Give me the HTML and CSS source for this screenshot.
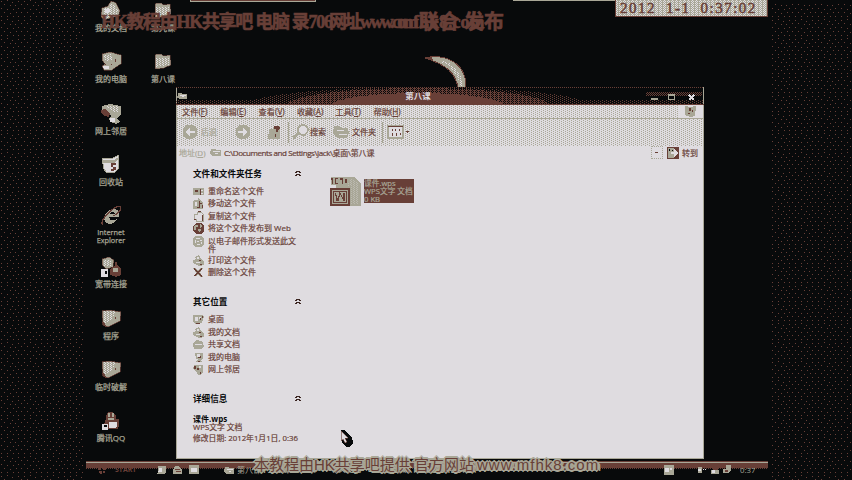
FILE: index.html
```html
<!DOCTYPE html>
<html lang="zh-CN">
<head>
<meta charset="utf-8">
<title>第八课</title>
<link rel="stylesheet" href="styles.css">
</head>
<body>
<svg class="defs" width="0" height="0" aria-hidden="true">
  <defs>
    <pattern id="half" width="2" height="2" patternUnits="userSpaceOnUse"><path fill="#683f37" d="M0 0h1v1H0zM1 1h1v1H1z"/></pattern>
    <pattern id="quarter" width="4" height="2" patternUnits="userSpaceOnUse"><path fill="#683f37" d="M0 0h1v1H0zM2 1h1v1H2z"/></pattern>
    <pattern id="light" width="3" height="2" patternUnits="userSpaceOnUse"><path fill="#dfdce0" d="M0 0h1v1H0zM1 1h1v1H1z"/></pattern>
    <pattern id="noise" width="23" height="19" patternUnits="userSpaceOnUse"><path fill="#683f37" d="M1 1h1v1H1zM7 0h1v1H7zM12 2h1v1h-1zM18 1h1v1h-1zM4 4h1v1H4zM10 5h1v1h-1zM15 5h1v1h-1zM21 4h1v1h-1zM1 8h1v1H1zM7 9h1v1H7zM13 9h1v1h-1zM18 8h1v1h-1zM4 12h1v1H4zM10 13h1v1h-1zM16 12h1v1h-1zM21 12h1v1h-1zM1 16h1v1H1zM7 16h1v1H7zM13 16h1v1h-1zM18 16h1v1h-1z"/></pattern>
    <symbol id="docs" viewBox="0 0 20 20"><path fill="#a9a797" stroke="#683f37" stroke-width=".6" d="M1 7l6-2 3-5 5 2 4 8-2 5-8 2-6 2-3-3z"/><path fill="url(#light)" d="M3 8l5-2 3-5 6 9-2 5-11 2z"/><path fill="#dfdce0" d="M3 8l5-1 2 4-5 1z"/></symbol>
    <symbol id="pc" viewBox="0 0 20 20"><path fill="#a9a797" stroke="#683f37" stroke-width=".6" d="M1 2L9 0l11 3v9l-5 3-4 3H3l-2-4 3-2-3-4z"/><path fill="url(#light)" d="M3 3l7-1 1 6-7 1z"/><path fill="#dfdce0" d="M2 14h6v3H3z"/><path fill="#683f37" d="M4 12h1v1H4zM10 12h1v1h-1zM14 7h1v3h-1z"/></symbol>
    <symbol id="net" viewBox="0 0 20 20"><path fill="#a9a797" d="M1 2l8-2 11 2v8l-4 4 3 4-4 2-6-2-1-4 3-2-5-2-5-3z"/><path fill="#683f37" d="M0 6l4-1 5 4-1 4-5-1-3-3z"/><path fill="url(#light)" d="M5 2h12v6h-6z"/><path fill="#dfdce0" d="M9 14h5v4H9z"/></symbol>
    <symbol id="bin" viewBox="0 0 20 20"><path fill="#dfdce0" stroke="#a9a797" d="M1 4l11-1 6-3-1 14-4 4-8-1-2-3z"/><path fill="#a9a797" d="M2 5h11l5-3v2l-5 4H2z"/><path fill="#683f37" d="M10 8h5v2h-3v2h3v3l-5 1v-2h2v-2h-2z"/></symbol>
    <symbol id="ie" viewBox="0 0 20 20"><path fill="#a9a797" fill-rule="evenodd" d="M5 7c4-6 12-5 13 0v4H8c0 4 4 4 8 2-3 7-13 6-13-1zM9 8h5c0-3-4-3-5 0z"/><path fill="none" stroke="#683f37" stroke-width="1.3" d="M2 19c-4-2 4-12 10-16s8-3 8-1c0 3-5 7-8 8"/></symbol>
    <symbol id="dial" viewBox="0 0 20 20"><path fill="#a9a797" stroke="#683f37" stroke-width=".6" d="M1 2l7-2 5 3-1 7-7 2-4-4z"/><path fill="url(#light)" d="M3 3h7v6H3z"/><path fill="#683f37" d="M14 5h2v3l4 4v6l-5 2-6-2v-6l5-3z"/><path fill="#dfdce0" d="M0 12h7v8H0z"/><path fill="#a9a797" d="M12 11h5v4h-5z"/><path fill="#080a0b" d="M4 14h2v3H4z"/></symbol>
    <symbol id="box" viewBox="0 0 20 20"><path fill="#a9a797" stroke="#683f37" stroke-width=".7" d="M1 2l7-1 12 2-1 9-12 6-5-2z"/><path fill="url(#light)" d="M2 2h12l-2 7-9 6z"/><path fill="#683f37" d="M1 13h2l3 5H4zM14 8h1v2h-1z"/></symbol>
    <symbol id="qq" viewBox="0 0 20 20"><path fill="#683f37" d="M7 1h5l3 4v3h3v6l-1 4H3v-5l2-5V5z"/><path fill="#a9a797" d="M7 2h2v4H7zM11 2h2v4h-2zM7 7h6v2H7z"/><path fill="#dfdce0" d="M8 11h8v4l-2 2H8zM1 13h6v6H1z"/><path fill="#080a0b" d="M3 14h3v2H3z"/></symbol>
    <symbol id="folder" viewBox="0 0 20 20"><path fill="#a9a797" stroke="#683f37" stroke-width=".5" d="M2 4l1-2h5l2 2 7-1 1 10-7 3-9 1z"/><path fill="url(#light)" d="M3 6h13v7l-13 2z"/></symbol>
    <symbol id="mini-folder" viewBox="0 0 12 9"><path fill="#a9a797" d="M1 1h4l1 1h5v6H3L0 6z"/><path fill="#dfdce0" d="M3 3h7v1H3zM5 5h3v1H5z"/></symbol>
    <symbol id="rename" viewBox="0 0 11 11"><path fill="#a9a797" d="M0 2h11v7H0z"/><path fill="#683f37" d="M2 4h3v2H2zM7 3h1v6H7z"/><path fill="#dfdce0" d="M8 4h2v1H8zM8 7h2v1H8z"/></symbol>
    <symbol id="move" viewBox="0 0 11 11"><path fill="#a9a797" d="M1 2h4V0l5 4v7H0V5z"/><path fill="#dfdce0" d="M2 4h2v4H2z"/><path fill="#683f37" d="M6 3h1v2h2v1H7v4H4V9h2zM9 7h1v3H9z"/></symbol>
    <symbol id="copy" viewBox="0 0 11 11"><path fill="#dfdce0" stroke="#a9a797" d="M1 3h3V1h4l2 2v7H3V8H1z"/><path fill="#683f37" d="M5 0h3v1H5zM9 4h1v6H9zM1 8h2v1H1z"/></symbol>
    <symbol id="globe" viewBox="0 0 11 11"><path fill="#683f37" d="M3 0h5l3 3v5l-3 3H3L0 8V3z"/><path fill="#a9a797" d="M2 2h3v2H3v3H1V4zM7 1l2 2-2 2zM5 6h3v2L6 9z"/></symbol>
    <symbol id="mail" viewBox="0 0 11 11"><path fill="#a9a797" d="M2 0h7l2 3v6l-3 2H2L0 9V3z"/><path fill="#dfdce0" d="M3 2h4v1H3zM2 4h1v3H2zM4 5h2v1H4zM7 4h2v1H7zM8 6h1v2H8zM4 8h3v1H4z"/></symbol>
    <symbol id="desk" viewBox="0 0 11 11"><path fill="#a9a797" d="M0 1h8l3 1-2 7-7 1-2-2z"/><path fill="#dfdce0" d="M2 3h3v4H2zM6 3h2v2H6z"/><path fill="#683f37" d="M9 2h1v2H8v2H7V4h2zM3 9h4v1H3z"/></symbol>
    <symbol id="print" viewBox="0 0 11 11"><path fill="#a9a797" d="M2 2l4-2 2 4 3 2v4l-5 1-6-3V5l3-1z"/><path fill="#dfdce0" d="M4 2h2v2H4zM3 7h4v1H3z"/><path fill="#683f37" d="M6 5h2v1H6zM7 9h2v1H7z"/></symbol>
    <symbol id="delete" viewBox="0 0 11 11"><path fill="none" stroke="#a9a797" stroke-width="2.500" d="M1 1l8 9M9 1L2 9"/><path fill="none" stroke="#683f37" stroke-width="1.4" d="M1 1l8 9M9 1L2 9"/></symbol>
    <symbol id="arrows" viewBox="0 0 6 7"><path fill="none" stroke="#3a2420" d="M.5 3L3 .8 5.500 3M.5 6L3 3.800 5.500 6"/></symbol>
  </defs>
</svg>

<main class="screen">
  <svg class="grain" width="84" height="480"><rect width="84" height="480" fill="url(#noise)"/></svg>

  <section class="desktop">
    <div class="column">
      <div class="shortcut"><svg><use href="#docs"/></svg><span>我的文档</span></div>
      <div class="shortcut"><svg><use href="#pc"/></svg><span>我的电脑</span></div>
      <div class="shortcut"><svg><use href="#net"/></svg><span>网上邻居</span></div>
      <div class="shortcut"><svg><use href="#bin"/></svg><span>回收站</span></div>
      <div class="shortcut"><svg><use href="#ie"/></svg><span class="latin">Internet<br>Explorer</span></div>
      <div class="shortcut"><svg><use href="#dial"/></svg><span>宽带连接</span></div>
      <div class="shortcut"><svg><use href="#box"/></svg><span>程序</span></div>
      <div class="shortcut"><svg><use href="#box"/></svg><span>临时破解</span></div>
      <div class="shortcut"><svg><use href="#qq"/></svg><span>腾讯QQ</span></div>
    </div>
    <div class="column">
      <div class="shortcut"><svg><use href="#folder"/></svg><span>第九课</span></div>
      <div class="shortcut"><svg><use href="#folder"/></svg><span>第八课</span></div>
    </div>

    <div class="dock-edge"></div>
    <div class="dock-line"></div>
    <div class="clock"><span>2012</span><span>1-1</span><span>0:37:02</span></div>
    <svg class="moon" width="44" height="34" viewBox="0 0 44 34"><path fill="#a9a797" stroke="#683f37" d="M1 2C18-2 42 4 42 31h-8C31 17 23 9 1 2z"/><path fill="url(#light)" d="M17 4c12 3 20 11 22 26h-3C33 17 27 10 17 6z"/><path fill="#683f37" d="M0 2l8-2 1 5z"/></svg>

    <section class="window">
      <header class="titlebar">
        <svg class="glow" width="528" height="18" viewBox="0 0 528 18">
          <path stroke="#683f37" stroke-dasharray="1 1" d="M0 .5h528"/>
          <path fill="url(#quarter)" d="M0 13h528v4H0z"/>
          <ellipse cx="242" cy="19" rx="172" ry="19" fill="url(#quarter)"/>
          <ellipse cx="242" cy="19" rx="132" ry="18" fill="url(#half)"/>
          <ellipse cx="242" cy="20" rx="88" ry="14" fill="#683f37"/>
          <path fill="url(#half)" d="M470 5h56v4h-56z"/>
          <path fill="#683f37" d="M0 17h528v1H0z"/>
        </svg>
        <svg class="title-icon" viewBox="0 0 12 9"><use href="#mini-folder"/></svg>
        <h1>第八课</h1>
        <svg class="controls" width="46" height="9" viewBox="0 0 46 9"><path fill="#a9a797" d="M0 6h7v2H0z"/><path fill="none" stroke="#a9a797" d="M17.500 3.500h6v4h-6zM17 2.500h7"/><path fill="none" stroke="#dfdce0" stroke-width="1.500" d="M38 3l5 5M43 3l-5 5"/></svg>
      </header>

      <div class="menubar">
        <nav><span>文件(<u>F</u>)</span><span>编辑(<u>E</u>)</span><span>查看(<u>V</u>)</span><span>收藏(<u>A</u>)</span><span>工具(<u>T</u>)</span><span>帮助(<u>H</u>)</span></nav>
        <div class="flag"><svg width="13" height="13" viewBox="0 0 13 13"><path fill="#a9a797" d="M1 1l5 1 6-1-1 10-5 1-5-2z"/><path fill="#683f37" d="M5 3h2v3H5zM8 5h1v2H8zM4 8h2v1H4z"/></svg></div>
      </div>

      <div class="toolbar">
        <svg class="round" viewBox="0 0 16 16"><circle cx="8" cy="8" r="7.500" fill="#a9a797"/><path fill="#dfdce0" d="M3 8l5-4v3h5v2H8v3z"/></svg>
        <span class="muted">后退</span>
        <svg class="round forward" viewBox="0 0 16 16"><circle cx="8" cy="8" r="7.500" fill="#a9a797"/><path fill="#dfdce0" d="M13 8L8 4v3H3v2h5v3z"/></svg>
        <svg class="up" width="13" height="15" viewBox="0 0 13 15"><path fill="#a9a797" d="M1 4h4l2-3h5v13H0z"/><path fill="#683f37" d="M6 1h4l2 2-2 2v2H8V4H6zM7 9h1v3H7z"/></svg>
        <i></i>
        <svg class="search" width="18" height="16" viewBox="0 0 18 16"><path stroke="#a9a797" stroke-width="3" d="M1 14l6-5"/><circle cx="11" cy="6" r="5" fill="#dfdce0" stroke="#a9a797" stroke-width="1.600"/></svg>
        <span>搜索</span>
        <svg class="folders" width="17" height="14" viewBox="0 0 17 14"><path fill="#a9a797" d="M1 1h5l2 2h7v3h2l-3 7H4L0 8z"/><path fill="#dfdce0" d="M4 5h7v1H4zM6 9h8v1H6z"/></svg>
        <span>文件夹</span>
        <i class="second"></i>
        <svg class="views" width="22" height="14" viewBox="0 0 22 14"><path fill="#dfdce0" stroke="#a9a797" stroke-width="2" d="M1 1h15v12H1z"/><path fill="#683f37" d="M1 1h15v1H1zM5 4h1v2H5zM8 4h1v2H8zM12 4h1v2h-1zM5 8h1v3H5zM9 8h1v3H9zM13 8h1v2h-1zM19 6h3v1h-1v1h-1V7h-1z"/></svg>
      </div>

      <div class="address">
        <span class="muted">地址(<u>D</u>)</span>
        <svg width="12" height="9"><use href="#mini-folder"/></svg>
        <span class="path">C:\Documents and Settings\Jack\<b>桌面\第八课</b></span>
        <div class="drop"></div>
        <svg class="go" width="12" height="12" viewBox="0 0 12 12"><path fill="#683f37" d="M0 0h12v12H0z"/><path fill="#a9a797" d="M1 1h6v2l4 3-4 4v1H1z"/><path fill="#dfdce0" d="M7 2l4 4-4 4V7H4V5h3z"/><path fill="#080a0b" d="M2 2h1v2H2zM5 3h1v1H5z"/></svg>
        <span>转到</span>
      </div>

      <div class="content">
        <aside>
          <section class="tasks">
            <h2>文件和文件夹任务<svg><use href="#arrows"/></svg></h2>
            <ul>
              <li><svg><use href="#rename"/></svg>重命名这个文件</li>
              <li><svg><use href="#move"/></svg>移动这个文件</li>
              <li><svg><use href="#copy"/></svg>复制这个文件</li>
              <li><svg><use href="#globe"/></svg>将这个文件发布到 Web</li>
              <li class="wrap"><svg><use href="#mail"/></svg>以电子邮件形式发送此文<br>件</li>
              <li><svg><use href="#print"/></svg>打印这个文件</li>
              <li><svg><use href="#delete"/></svg>删除这个文件</li>
            </ul>
          </section>
          <section class="places">
            <h2>其它位置<svg><use href="#arrows"/></svg></h2>
            <ul>
              <li><svg><use href="#desk"/></svg>桌面</li>
              <li><svg><use href="#print"/></svg>我的文档</li>
              <li><svg viewBox="0 0 11 11"><path fill="#a9a797" d="M1 3l3-2 6 2 1 5-3 2H1L0 5z"/><path fill="#dfdce0" d="M2 5h7v1H2z"/></svg>共享文档</li>
              <li><svg viewBox="0 0 11 11"><path fill="#a9a797" d="M2 1h8v6L8 8l1 2H3l2-3H3z"/><path fill="#dfdce0" d="M4 2h3v3H4z"/><path fill="#683f37" d="M7 4h1v2H5V5h2zM5 9h2v1H5z"/></svg>我的电脑</li>
              <li><svg viewBox="0 0 11 11"><path fill="#a9a797" d="M1 1h9v7l-2 3H5L4 8 0 5z"/><path fill="#683f37" d="M1 2h2v3H1zM4 4h2v2H4zM7 8h1v2H7z"/><path fill="#dfdce0" d="M6 2h2v2H6z"/></svg>网上邻居</li>
            </ul>
          </section>
          <section class="details">
            <h2>详细信息<svg><use href="#arrows"/></svg></h2>
            <h3>课件.wps</h3>
            <p>WPS文字 文档</p>
            <p class="date">修改日期: 2012年1月1日, 0:36</p>
          </section>
        </aside>
        <div class="file">
          <svg width="33" height="31" viewBox="0 0 33 31"><path fill="#a9a797" d="M1 1h24l7 7v22H1z"/><path fill="url(#light)" d="M20 3h5l5 6v19h-8V10h-3z" opacity=".35"/><path fill="#dfdce0" d="M0 0h2v9h5v3H0z"/><path fill="#683f37" d="M2 2h2v6H3V4H2zM6 2h3v1H7v4h2v1H6zM11 2h3v6h-1V4h-2zM16 3h2v4h-2z"/><path fill="#a9a797" stroke="#683f37" stroke-width="2" d="M2 13h18v16H2z"/><path fill="none" stroke="#683f37" d="M4.500 15.500h13v11h-13z"/><path fill="none" stroke="#683f37" stroke-width="1.200" d="M6 17l3 8 2-8 4 8V17M7 25l4-6"/></svg>
          <div class="selected">课件.wps<br>WPS文字 文档<br>0 KB</div>
        </div>
      </div>
    </section>

    <footer class="taskbar">
      <div class="start"><svg width="8" height="8" viewBox="0 0 8 8"><path fill="#683f37" d="M0 1h3v3H0zM4 0h4v4H5zM1 5h3v3H2zM5 5h2v2H5z"/></svg><b>START</b></div>
      <div class="quick">
        <svg viewBox="0 0 11 11"><path fill="#a9a797" d="M2 1h8v8l-3 1H1z"/><path fill="#dfdce0" d="M3 3h3v5H2z"/></svg>
        <svg viewBox="0 0 11 11"><path fill="#a9a797" d="M3 1h4l3 4v5H1V5z"/><path fill="#683f37" d="M3 4h5v1H3zM4 7h5v1H4z"/></svg>
        <svg viewBox="0 0 11 11"><path fill="#a9a797" d="M0 0h11v10H0z"/><path fill="#dfdce0" d="M3 3h6v5H3z"/></svg>
      </div>
      <div class="task"><svg width="11" height="9"><use href="#mini-folder"/></svg>第八课</div>
      <div class="tray">
        <svg class="ime" viewBox="0 0 11 11"><path fill="#a9a797" d="M0 0h11v11H0z"/><path fill="#dfdce0" d="M2 3h4v5H2zM7 3h2v2H7z"/></svg>
        <svg viewBox="0 0 11 11"><path fill="#a9a797" d="M1 2h5v7H2z"/><path fill="#dfdce0" d="M2 4h3v3H2zM7 4h1v2H7zM9 4h1v2H9z"/></svg>
        <svg viewBox="0 0 11 11"><path fill="#683f37" d="M4 0h5v5H4z"/><path fill="#a9a797" d="M2 5h8v5H2z"/><path fill="#dfdce0" d="M3 6h3v3H3z"/></svg>
        <svg viewBox="0 0 11 11"><path fill="#a9a797" d="M4 0h5v6L7 9H1V4h3z"/><path fill="#683f37" d="M3 5h3v3H3z"/></svg>
        <time>0:37</time>
      </div>
    </footer>

    <svg class="pointer" width="14" height="18" viewBox="0 0 14 18"><path fill="#080a0b" d="M1 0h3l8 7 1 6-3 4H6l-4-4z"/><path fill="#dfdce0" stroke="#683f37" stroke-width=".6" d="M1 1l7 7H5l2 4-2 1-2-4-2 2z"/></svg>
    <div class="banner-top"><span class="first">HK教程由HK共享吧 电脑 录706</span><span class="second">网址www.com</span><span class="third">mfhk8.com</span><span class="fourth">联合 发布</span></div>
    <div class="banner-bottom"><span>本教程由HK共享吧提供 官方网站</span><span class="site">www.mfhk8.com</span></div>
  </section>

  <svg class="grain right" width="82" height="480"><rect y="4" width="80" height="476" fill="url(#noise)"/></svg>
</main>
</body>
</html>
```

FILE: styles.css
```css
:root {
  --black: #080a0b;
  --brown: #683f37;
  --gray: #a9a797;
  --light: #dfdce0;
}

* { box-sizing: border-box; }

body {
  margin: 0;
  background: var(--black);
  color: var(--brown);
  font: 8px/10px "Open Sans", "Noto Sans CJK SC", sans-serif;
}

svg { display: block; flex: none; shape-rendering: crispEdges; }
.defs { position: absolute; }
h1, h2, h3, p, ul { margin: 0; padding: 0; }
ul { list-style: none; }
u { text-underline-offset: 1px; }

.screen {
  display: grid;
  grid-template-columns: 86px 684px 82px;
  width: 852px;
  height: 480px;
  overflow: hidden;
}

.desktop { position: relative; display: flex; gap: 2px; height: 480px; }

.column {
  display: grid;
  grid-auto-rows: 51.25px;
  align-content: start;
  width: 50px;
  padding-top: 1px;
}
.shortcut {
  display: flex;
  flex-direction: column;
  align-items: center;
  gap: 2px;
  color: var(--gray);
  white-space: nowrap;
  -webkit-text-stroke: .25px var(--gray);
}
.shortcut svg { width: 22px; height: 20px; }
.shortcut .latin { font-size: 7.3px; line-height: 8px; text-align: center; }

.dock-edge {
  position: absolute;
  left: 104px;
  top: 0;
  width: 126px;
  height: 2px;
  background: var(--brown);
  border: solid var(--gray);
  border-width: 0 1px 1px;
}
.dock-line { position: absolute; left: 427px; top: 0; width: 103px; height: 1px; background: var(--gray); }

.clock {
  position: absolute;
  left: 529px;
  top: 0;
  display: flex;
  gap: 10px;
  width: 153px;
  height: 17px;
  padding-left: 4px;
  border: solid var(--brown);
  border-width: 0 1px 1px;
  background:
    conic-gradient(at 1px 1px, transparent 75%, var(--light) 0) 0 0 / 4px 2px,
    conic-gradient(at 1px 1px, transparent 75%, var(--light) 0) 1px 1px / 2px 2px,
    var(--gray);
  font: 15px/16px "Liberation Serif", serif;
  letter-spacing: 1.5px;
  -webkit-text-stroke: .5px var(--brown);
}

.moon { position: absolute; left: 338px; top: 56px; }

.window {
  position: absolute;
  left: 90px;
  top: 87px;
  display: flex;
  flex-direction: column;
  width: 528px;
  height: 372px;
  border: solid var(--gray);
  border-width: 0 1px 1px;
  background: var(--light);
}

.titlebar {
  position: relative;
  display: grid;
  grid-template-columns: 60px 1fr 60px;
  align-items: center;
  height: 18px;
  background: var(--black);
}
.glow { position: absolute; inset: 0 auto auto -1px; }
.title-icon { position: relative; width: 11px; height: 8px; }
.titlebar h1 { position: relative; padding-right: 44px; color: var(--light); font-size: 8.5px; text-align: center; }
.controls { position: relative; margin-left: 8px; }

.menubar, .toolbar {
  background:
    conic-gradient(at 1px 1px, transparent 75%, var(--gray) 0) 0 0 / 4px 2px,
    conic-gradient(at 1px 1px, transparent 75%, var(--gray) 0) 2px 1px / 4px 2px,
    var(--light);
}
.menubar { display: flex; justify-content: space-between; height: 14px; border-bottom: 1px solid var(--gray); }
nav { display: flex; align-items: center; padding-left: 5px; font-size: 8.2px; }
nav, .toolbar span, .address span, li, .details p { -webkit-text-stroke-width: .2px; }
nav span { width: 38.3px; }
.flag { display: grid; place-items: center; width: 25px; background: var(--light); }

.toolbar { display: flex; align-items: center; height: 27px; padding: 0 0 1px 5px; }
.round { width: 16px; height: 16px; }
.muted { color: var(--gray); }
.toolbar .muted { margin-left: 3px; }
.forward { margin-left: 18px; }
.up { margin-left: 17px; }
.toolbar i { width: 1px; height: 21px; margin: 0 3px 0 7px; background: var(--gray); }
.search { margin-right: 0; }
.folders { margin: 0 2px 0 7px; }
.toolbar i.second { margin: 0 4px 0 6px; }

.address { display: flex; align-items: center; height: 14px; padding: 0 0 1px 2px; white-space: nowrap; }
.address > .muted { width: 31px; }
.path { margin-left: 2px; letter-spacing: -.42px; }
.path b { font-weight: 400; letter-spacing: -.2px; }
.drop { width: 12px; height: 13px; margin: 0 4px 0 auto; border: 1px dotted var(--gray); }
.drop::after { content: ""; display: block; width: 3px; height: 1px; margin: 5px 3px; background: var(--brown); }
.go { margin-right: 3px; }
.address > span:last-child { width: 21px; }

.content { display: flex; flex: 1; }
aside { width: 150px; padding: 9px 0 0 16px; }
h2 {
  display: flex;
  justify-content: space-between;
  align-items: center;
  width: 108px;
  height: 10px;
  color: var(--black);
  font-size: 8.6px;
  line-height: 10px;
}
h2 svg { width: 6px; height: 7px; margin-top: -2px; }
.tasks { height: 128px; }
.places { height: 97px; }
aside ul { padding-top: 5.5px; }
.places ul { padding-top: 6px; }
li { display: grid; grid-template-columns: 15px 1fr; height: 12.5px; line-height: 12px; white-space: nowrap; }
li svg { grid-row: span 2; width: 11px; height: 11px; margin-top: 1px; }
.wrap { height: 19px; line-height: 8px; padding-top: 2px; display: block; padding-left: 15px; }
.wrap svg { float: left; margin: -1px 0 0 -15px; }
h3 { margin-top: 10px; color: var(--black); font-size: 8px; line-height: 10px; }
.details p { line-height: 8px; white-space: nowrap; font-size: 7.8px; margin-top: -1px; }
.details .date { margin-top: 3px; }

.file { display: flex; align-items: flex-start; gap: 2px; padding: 16px 0 0 2px; }
.selected {
  width: 50px;
  height: 24px;
  margin-top: 3px;
  background: var(--brown);
  color: var(--gray);
  font-size: 7.7px;
  line-height: 8px;
  white-space: nowrap;
  -webkit-text-stroke: .2px var(--gray);
}

.taskbar {
  position: absolute;
  left: 0;
  top: 461px;
  display: flex;
  align-items: center;
  width: 682px;
  height: 19px;
  border-top: 1px solid var(--brown);
  background:
    linear-gradient(var(--gray), var(--gray)) 0 0 / 100% 1px no-repeat,
    linear-gradient(var(--brown), var(--brown)) 0 0 / 100% 6px no-repeat,
    conic-gradient(at 1px 1px, transparent 75%, var(--brown) 0) 0 0 / 2px 2px;
}
.taskbar::before {
  content: "";
  position: absolute;
  inset: 8px 0 0;
  background: var(--black);
}
.taskbar > * { position: relative; top: -1px; }
.start { display: flex; align-items: center; gap: 9px; width: 70px; padding-left: 12px; }
.start b { font-size: 7px; }
.quick { display: flex; gap: 5px; width: 68px; }
.quick svg { width: 11px; height: 10px; }
.task { display: flex; align-items: center; gap: 2px; color: var(--gray); }
.tray { display: flex; align-items: center; gap: 2px; margin-left: auto; width: 105px; }
.tray svg { width: 11px; height: 10px; }
.tray .ime { margin-right: 20px; }
.tray time { margin-left: 5px; color: var(--gray); font-size: 7.8px; }

.pointer { position: absolute; left: 254px; top: 430px; }

.banner-top {
  position: absolute;
  left: 15px;
  top: 10px;
  display: flex;
  width: 410px;
  font: bold 18px/24px "Liberation Serif", "Noto Sans CJK SC", serif;
  white-space: nowrap;
  -webkit-text-stroke: .6px var(--brown);
}
.banner-top span { flex: none; }
.banner-top .first { width: 228px; letter-spacing: -1.3px; }
.banner-top .second { width: 69px; letter-spacing: -2.6px; }
.banner-top .third { width: 21px; }
.banner-top .fourth { font-size: 20px; }

.banner-bottom {
  position: absolute;
  left: 168px;
  top: 456px;
  display: flex;
  width: 348px;
  height: 17px;
  font: 15px/17px "Liberation Sans", "Noto Sans CJK SC", sans-serif;
  white-space: nowrap;
  text-shadow: -1px -1px var(--gray), 1px -1px var(--gray), -1px 1px var(--gray), 1px 1px var(--gray), 0 2px var(--gray), 0 -2px var(--gray), 2px 0 var(--gray), -2px 0 var(--gray), 3px 1px var(--gray), -3px 1px var(--gray);
}
.banner-bottom span { flex: none; width: 223px; }
.banner-bottom .site { width: 125px; letter-spacing: 1px; }

.grain.right { margin-left: 1px; }
```
